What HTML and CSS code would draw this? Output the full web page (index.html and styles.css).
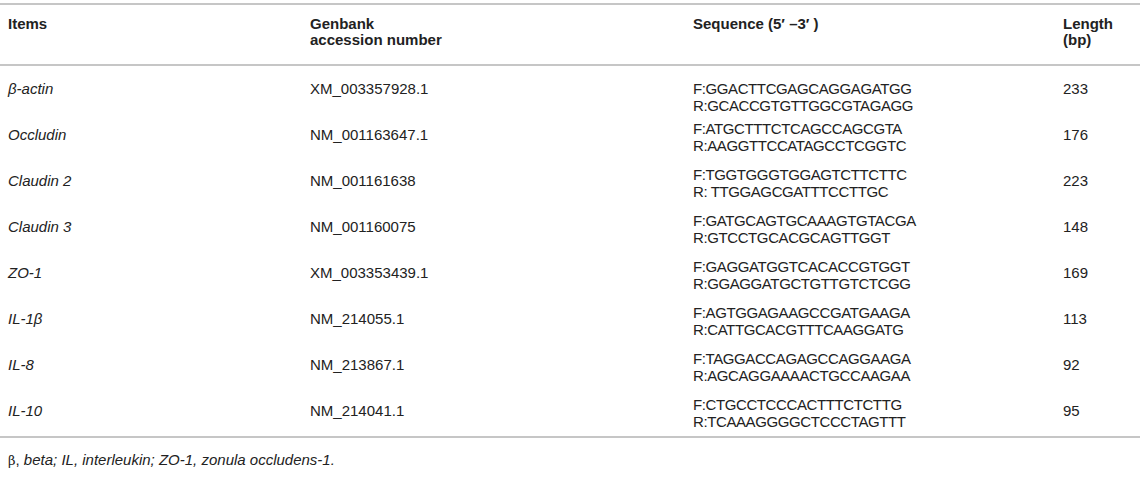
FILE: index.html
```html
<!DOCTYPE html>
<html lang="en">
<head>
<meta charset="utf-8">
<title>Primer sequences</title>
<link rel="stylesheet" href="styles.css">
</head>
<body>
<div class="wrap">
<table class="primers">
  <colgroup>
    <col class="c-item"><col class="c-acc"><col class="c-seq"><col class="c-len">
  </colgroup>
  <thead>
    <tr>
      <th>Items</th>
      <th>Genbank<br>accession number</th>
      <th>Sequence (5′ –3′ )</th>
      <th>Length<br>(bp)</th>
    </tr>
  </thead>
  <tbody>
    <tr class="first">
      <td class="gene">β-actin</td><td>XM_003357928.1</td>
      <td class="seq">F:GGACTTCGAGCAGGAGATGG<br>R:GCACCGTGTTGGCGTAGAGG</td><td>233</td>
    </tr>
    <tr>
      <td class="gene">Occludin</td><td>NM_001163647.1</td>
      <td class="seq">F:ATGCTTTCTCAGCCAGCGTA<br>R:AAGGTTCCATAGCCTCGGTC</td><td>176</td>
    </tr>
    <tr>
      <td class="gene">Claudin 2</td><td>NM_001161638</td>
      <td class="seq">F:TGGTGGGTGGAGTCTTCTTC<br>R: TTGGAGCGATTTCCTTGC</td><td>223</td>
    </tr>
    <tr>
      <td class="gene">Claudin 3</td><td>NM_001160075</td>
      <td class="seq">F:GATGCAGTGCAAAGTGTACGA<br>R:GTCCTGCACGCAGTTGGT</td><td>148</td>
    </tr>
    <tr>
      <td class="gene">ZO-1</td><td>XM_003353439.1</td>
      <td class="seq">F:GAGGATGGTCACACCGTGGT<br>R:GGAGGATGCTGTTGTCTCGG</td><td>169</td>
    </tr>
    <tr>
      <td class="gene">IL-1β</td><td>NM_214055.1</td>
      <td class="seq">F:AGTGGAGAAGCCGATGAAGA<br>R:CATTGCACGTTTCAAGGATG</td><td>113</td>
    </tr>
    <tr>
      <td class="gene">IL-8</td><td>NM_213867.1</td>
      <td class="seq">F:TAGGACCAGAGCCAGGAAGA<br>R:AGCAGGAAAACTGCCAAGAA</td><td>92</td>
    </tr>
    <tr>
      <td class="gene">IL-10</td><td>NM_214041.1</td>
      <td class="seq">F:CTGCCTCCCACTTTCTCTTG<br>R:TCAAAGGGGCTCCCTAGTTT</td><td>95</td>
    </tr>
  </tbody>
</table>
<p class="note"><span class="sym">β</span>, <em>beta; IL, interleukin; ZO-1, zonula occludens-1.</em></p>
</div>
</body>
</html>
```

FILE: styles.css
```css
html, body {
  margin: 0;
  padding: 0;
  background: #ffffff;
}

body {
  font-family: "Liberation Sans", Arial, Helvetica, sans-serif;
  color: #222222;
  font-size: 15px;
}

.wrap {
  padding-top: 3px;
  width: 1140px;
}

.primers {
  width: 1140px;
  border-collapse: collapse;
  table-layout: fixed;
  border-top: 2px solid #c6c6c6;
  border-bottom: 2px solid #c6c6c6;
}

.c-item { width: 302px; }
.c-acc { width: 383px; }
.c-seq { width: 370px; }
.c-len { width: 85px; }

.primers th {
  text-align: left;
  font-weight: bold;
  line-height: 16px;
  padding: 11px 0 16px 8px;
  vertical-align: top;
  border-bottom: 2px solid #c6c6c6;
}

.primers td {
  vertical-align: top;
  line-height: 17px;
  padding: 12px 0 0 8px;
}

.primers td.seq {
  padding-top: 6px;
  padding-bottom: 6px;
  letter-spacing: -0.4px;
}

.primers tr.first td {
  padding-top: 14px;
}

.primers tr.first td.seq {
  padding-top: 14px;
  padding-bottom: 0;
}

.gene {
  font-style: italic;
}

.note {
  margin: 13px 0 0 8px;
  font-size: 15px;
  line-height: 18px;
}

.note em {
  font-style: italic;
}

.note .sym {
  font-family: "DejaVu Serif", "Liberation Serif", serif;
  font-size: 13px;
}
```
